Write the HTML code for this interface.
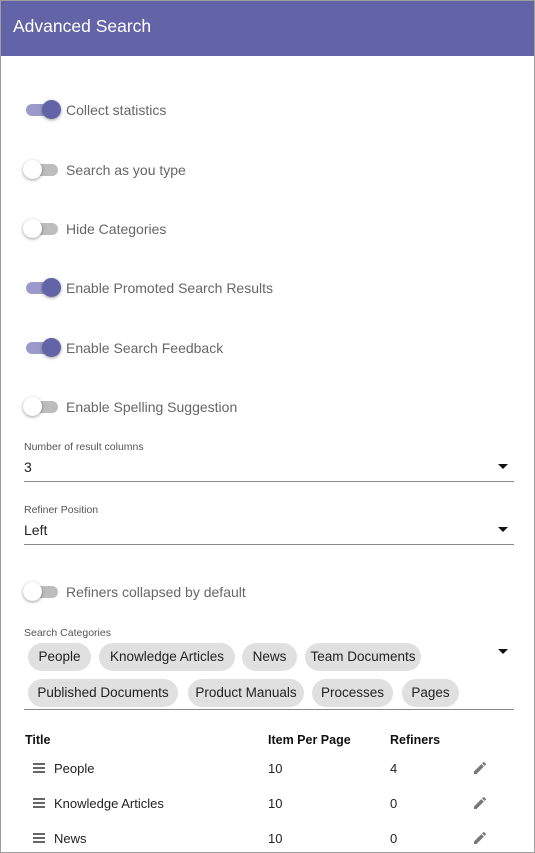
<!DOCTYPE html>
<html><head><style>
*{box-sizing:border-box;margin:0;padding:0}
body{width:535px;height:853px;overflow:hidden;font-family:"Liberation Sans",sans-serif;background:#fff;position:relative;border:1px solid #9e9e9e}
.hdr{position:absolute;left:0;top:0;width:533px;height:55px;background:#6264a7;color:#fff;font-size:17.5px;padding:15px 0 0 12px}
.tg{position:absolute;left:25px;width:32px;height:12px;border-radius:6px;background:#bdbdbd}
.tg.on{background:#9a9bcb}
.tg i{position:absolute;top:-4px;left:-3px;width:19px;height:19px;border-radius:50%;background:#fff;box-shadow:0 1px 3px rgba(0,0,0,.4)}
.tg.on i{left:16px;background:#6264a7}
.lb{position:absolute;left:65px;font-size:14px;color:#666}
.sl{position:absolute;left:23px;font-size:10.5px;color:#555}
.sv{position:absolute;left:23px;font-size:14px;color:#222}
.ul{position:absolute;left:23px;width:490px;height:1px;background:#888}
.ar{position:absolute;left:497px;width:0;height:0;border-left:5px solid transparent;border-right:5px solid transparent;border-top:5px solid #111}
.ch{position:absolute;height:28px;border-radius:14px;background:#e0e0e0;font-size:13.5px;color:#222;line-height:28px;text-align:center;white-space:nowrap}
.th{position:absolute;font-size:12.5px;font-weight:bold;color:#111}
.td{position:absolute;font-size:13px;color:#222}
.hb{position:absolute;left:32px;width:12px;height:10px;border-top:2px solid #666;border-bottom:2px solid #666}
.hb:after{content:"";position:absolute;left:0;top:2px;width:12px;height:2px;background:#666}
</style></head><body>
<div class="hdr">Advanced Search</div>

<div class="tg on" style="top:103px"><i></i></div><div class="lb" style="top:101px">Collect statistics</div>
<div class="tg" style="top:163px"><i></i></div><div class="lb" style="top:161px">Search as you type</div>
<div class="tg" style="top:222px"><i></i></div><div class="lb" style="top:220px">Hide Categories</div>
<div class="tg on" style="top:281px"><i></i></div><div class="lb" style="top:279px">Enable Promoted Search Results</div>
<div class="tg on" style="top:341px"><i></i></div><div class="lb" style="top:339px">Enable Search Feedback</div>
<div class="tg" style="top:400px"><i></i></div><div class="lb" style="top:398px">Enable Spelling Suggestion</div>

<div class="sl" style="top:440px">Number of result columns</div>
<div class="sv" style="top:458px">3</div>
<div class="ar" style="top:463px"></div>
<div class="ul" style="top:480px"></div>

<div class="sl" style="top:503px">Refiner Position</div>
<div class="sv" style="top:521px">Left</div>
<div class="ar" style="top:526px"></div>
<div class="ul" style="top:543px"></div>

<div class="tg" style="top:585px"><i></i></div><div class="lb" style="top:583px">Refiners collapsed by default</div>

<div class="sl" style="top:626px">Search Categories</div>
<div class="ar" style="top:648px"></div>
<div class="ch" style="left:27px;top:642px;width:63px">People</div>
<div class="ch" style="left:98px;top:642px;width:136px">Knowledge Articles</div>
<div class="ch" style="left:241px;top:642px;width:55px">News</div>
<div class="ch" style="left:304px;top:642px;width:116px">Team Documents</div>
<div class="ch" style="left:27px;top:678px;width:150px">Published Documents</div>
<div class="ch" style="left:187px;top:678px;width:116px">Product Manuals</div>
<div class="ch" style="left:311px;top:678px;width:81px">Processes</div>
<div class="ch" style="left:401px;top:678px;width:57px">Pages</div>
<div class="ul" style="top:708px"></div>

<div class="th" style="left:24px;top:732px">Title</div>
<div class="th" style="left:267px;top:732px">Item Per Page</div>
<div class="th" style="left:389px;top:732px">Refiners</div>

<div class="hb" style="top:762px"></div><div class="td" style="left:53px;top:760px">People</div><div class="td" style="left:267px;top:760px">10</div><div class="td" style="left:389px;top:760px">4</div>
<div class="hb" style="top:797px"></div><div class="td" style="left:53px;top:795px">Knowledge Articles</div><div class="td" style="left:267px;top:795px">10</div><div class="td" style="left:389px;top:795px">0</div>
<div class="hb" style="top:832px"></div><div class="td" style="left:53px;top:830px">News</div><div class="td" style="left:267px;top:830px">10</div><div class="td" style="left:389px;top:830px">0</div>

<svg style="position:absolute;left:471px;top:759px" width="16" height="16" viewBox="0 0 24 24"><path fill="#777" d="M3 17.25V21h3.75L17.81 9.940l-3.75-3.75L3 17.25zM20.71 7.04a1 1 0 0 0 0-1.41l-2.34-2.34a1 1 0 0 0-1.41 0l-1.830 1.83 3.75 3.75 1.83-1.83z"/></svg>
<svg style="position:absolute;left:471px;top:794px" width="16" height="16" viewBox="0 0 24 24"><path fill="#777" d="M3 17.25V21h3.75L17.81 9.94l-3.75-3.75L3 17.25zM20.71 7.04a1 1 0 0 0 0-1.41l-2.34-2.34a1 1 0 0 0-1.41 0l-1.83 1.83 3.75 3.75 1.83-1.83z"/></svg>
<svg style="position:absolute;left:471px;top:829px" width="16" height="16" viewBox="0 0 24 24"><path fill="#777" d="M3 17.25V21h3.75L17.81 9.94l-3.75-3.75L3 17.25zM20.71 7.04a1 1 0 0 0 0-1.41l-2.34-2.34a1 1 0 0 0-1.41 0l-1.83 1.83 3.75 3.75 1.83-1.83z"/></svg>
</body></html>
